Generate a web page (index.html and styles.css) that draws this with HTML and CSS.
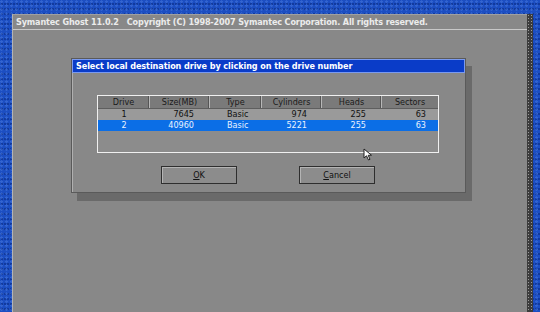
FILE: index.html
```html
<!DOCTYPE html>
<html>
<head>
    <title>Symantec Ghost 11.0.2</title>
    <link rel="stylesheet" href="styles.css">
</head>
<body>
    <div class="desktop">
        <!-- Main Ghost window -->
        <div class="ghost-window">
            <div class="ghost-title">Symantec Ghost 11.0.2&nbsp;&nbsp;&nbsp;Copyright (C) 1998-2007 Symantec Corporation. All rights reserved.</div>

            <!-- Drive selection dialog -->
            <div class="dialog">
                <div class="dialog-title">Select local destination drive by clicking on the drive number</div>
                <div class="dialog-body">
                    <div class="drive-table">
                        <div class="row head">
                            <span class="c">Drive</span>
                            <span class="c">Size(MB)</span>
                            <span class="c">Type</span>
                            <span class="c">Cylinders</span>
                            <span class="c">Heads</span>
                            <span class="c">Sectors</span>
                        </div>
                        <div class="row">
                            <span class="c">1</span>
                            <span class="r pad-size">7645</span>
                            <span class="l">Basic</span>
                            <span class="r pad-cyl">974</span>
                            <span class="r pad-heads">255</span>
                            <span class="r pad-sec">63</span>
                        </div>
                        <div class="row selected">
                            <span class="c">2</span>
                            <span class="r pad-size">40960</span>
                            <span class="l">Basic</span>
                            <span class="r pad-cyl">5221</span>
                            <span class="r pad-heads">255</span>
                            <span class="r pad-sec">63</span>
                        </div>
                    </div>
                    <div class="buttons">
                        <button class="btn"><u>O</u>K</button>
                        <button class="btn"><u>C</u>ancel</button>
                    </div>
                </div>
            </div>

            <!-- Mouse pointer -->
            <svg class="pointer" width="12" height="14" viewBox="0 0 12 14">
                <path d="M1 1 L1 10 L3.5 7.8 L5.5 12 L7 11.3 L5.2 7.3 L8.5 7.2 Z" fill="#ffffff" stroke="#222222" stroke-width="1"/>
            </svg>
        </div>
        <div class="edge"></div>
    </div>
</body>
</html>
```

FILE: styles.css
```css
/* General Styles */
body {
    margin: 0;
    padding: 0;
    width: 540px;
    height: 312px;
    overflow: hidden;
    font-family: "DejaVu Sans Condensed", "DejaVu Sans", sans-serif;
    background-color: #1c4ec2; /* blue desktop */
    background-image:
        radial-gradient(circle at 30% 40%, rgba(120, 170, 255, 0.25) 0 1px, transparent 1.5px),
        radial-gradient(circle at 70% 80%, rgba(0, 20, 90, 0.35) 0 1px, transparent 1.5px);
    background-size: 5px 4px, 3px 5px;
}

.desktop {
    display: flex;
    padding: 14px 0 0 12px;
    height: 298px;
}

/* Main window */
.ghost-window {
    position: relative;
    width: 514px;
    background-color: #888888;
    border-left: 1px solid #b4b4b4;
    border-top: 1px solid #a0a0a0;
}

.edge {
    width: 6px;
    background-color: #3c3c3c;
    background-image:
        radial-gradient(circle, #9a9a9a 0 0.7px, transparent 1px);
    background-size: 3px 3px;
}

.ghost-title {
    height: 12px;
    padding: 2px 0 0 3px;
    font-size: 9px;
    font-weight: bold;
    line-height: 11px;
    letter-spacing: -0.15px;
    color: #ececec;
    border-bottom: 1px solid #c8c8c8;
}

/* Dialog */
.dialog {
    width: 393px;
    margin: 28px 0 0 58px;
    border: 1px solid #5a5a5a;
    background-color: #888888;
    box-shadow: 6px 8px 0 #6a6a6a;
}

.dialog-title {
    height: 12px;
    padding: 0 0 0 3px;
    font-size: 9px;
    font-weight: bold;
    line-height: 12px;
    letter-spacing: -0.08px;
    color: #ffffff;
    background-color: #0a3cc8;
    border: 1px solid #7a9af0;
}

.dialog-body {
    padding: 22px 0 8px 24px;
    border-left: 1px solid #b0b0b0;
}

/* Drive table */
.drive-table {
    width: 340px;
    height: 56px;
    border: 1px solid #f0f0f0;
    background-color: #8c8c8c;
}

.row {
    display: grid;
    grid-template-columns: 52px 60px 52px 60px 60px 56px;
    height: 11px;
    font-size: 9px;
    line-height: 11px;
    color: #111111;
    background-color: #9a9a9a;
}

.row span {
    white-space: nowrap;
}

.row.head {
    height: 12px;
    line-height: 12px;
    background-color: #7a7a7a;
    color: #1a1a1a;
    border-bottom: 1px solid #5e5e5e;
}

.row.head span {
    border-right: 1px solid #b8b8b8;
    box-shadow: inset -1px 0 0 #555555;
}

.row.head span:last-child {
    border-right: none;
    box-shadow: none;
}

.row.selected {
    background-color: #0b6ee6;
    color: #e8f2ff;
}

.c { text-align: center; }
.l { text-align: left; padding-left: 17px; }
.r { text-align: right; }

.pad-size { padding-right: 16px; }
.pad-cyl { padding-right: 15px; }
.pad-heads { padding-right: 16px; }
.pad-sec { padding-right: 12px; }

/* Buttons */
.buttons {
    display: flex;
    gap: 62px;
    margin: 13px 0 0 64px;
}

.btn {
    width: 76px;
    height: 18px;
    padding: 0;
    font-family: inherit;
    font-size: 9px;
    color: #111111;
    background-color: #8c8c8c;
    border: 1px solid #2e2e2e;
    box-shadow: inset 1px 1px 0 #b4b4b4;
}

/* Mouse pointer */
.pointer {
    position: absolute;
    left: 350px;
    top: 133px;
}
```
